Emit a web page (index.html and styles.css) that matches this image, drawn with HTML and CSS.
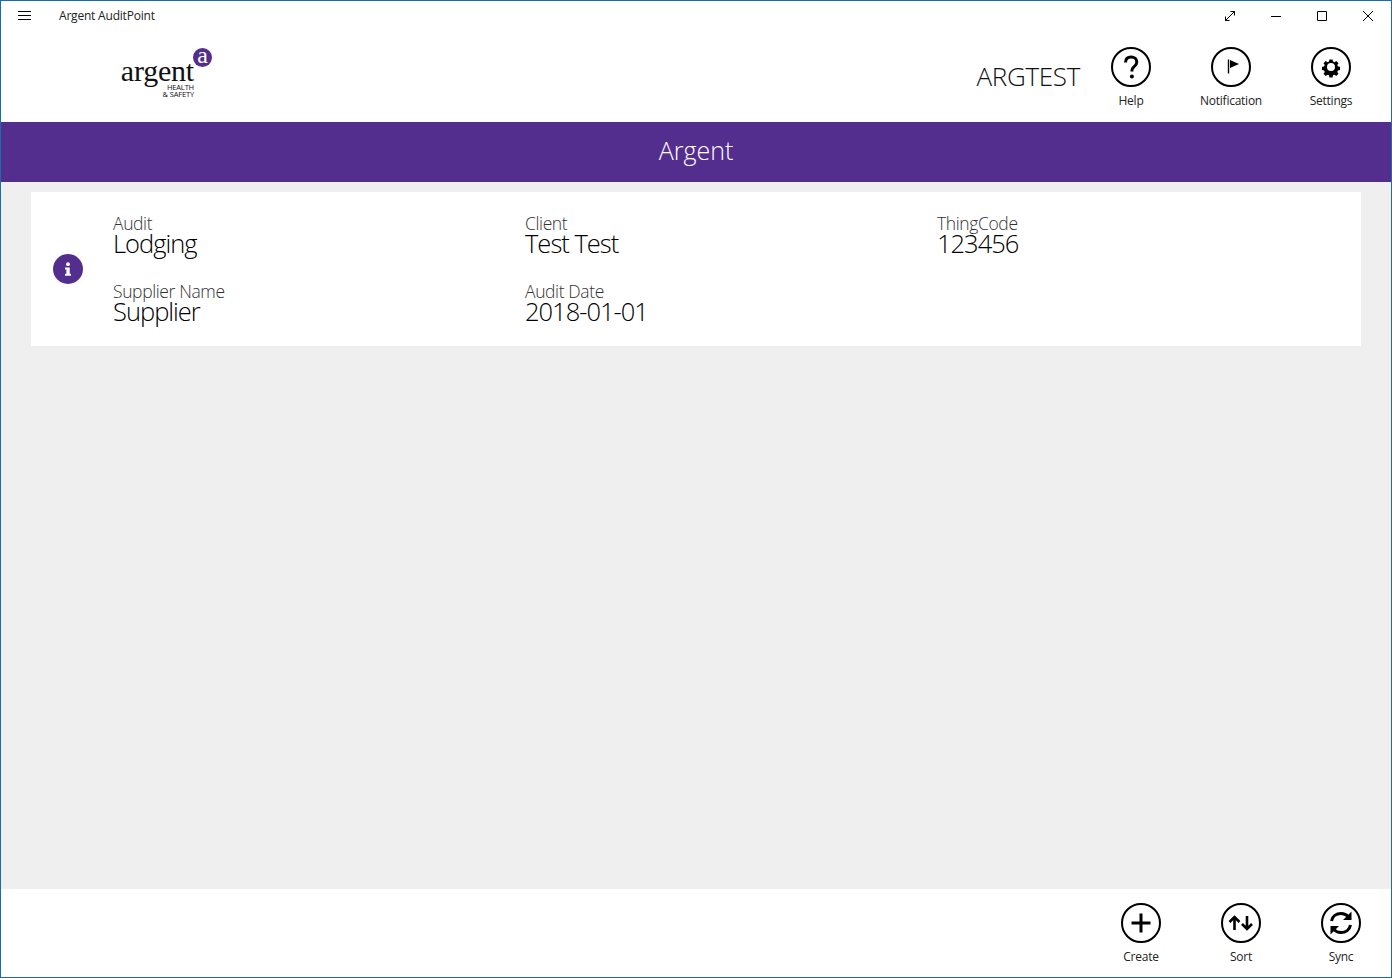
FILE: index.html
```html
<!DOCTYPE html>
<html lang="en">
<head>
<meta charset="utf-8">
<title>Argent AuditPoint</title>
<link rel="stylesheet" href="styles.css">
</head>
<body>
<div class="window">
  <div class="titlebar">
    <svg class="hamburger" width="13" height="10" viewBox="0 0 13 10"><path d="M0 .5h13M0 4.500h13M0 8.500h13" stroke="#000" fill="none"/></svg>
    <span class="apptitle">Argent AuditPoint</span>
    <div class="winctrls">
      <span class="winbtn"><svg width="12" height="12" viewBox="0 0 12 12" fill="none" stroke="#000"><path d="M1.500 10.500l9-9M6.500 1.500h4v4M1.500 6.500v4h4"/></svg></span>
      <span class="winbtn"><svg width="12" height="12" viewBox="0 0 12 12" fill="none" stroke="#000"><path d="M1 6.500h10"/></svg></span>
      <span class="winbtn"><svg width="12" height="12" viewBox="0 0 12 12" fill="none" stroke="#000"><path d="M1.500 1.500h9v9h-9z"/></svg></span>
      <span class="winbtn"><svg width="12" height="12" viewBox="0 0 12 12" fill="none" stroke="#000"><path d="M1 1l10 10M11 1L1 11"/></svg></span>
    </div>
  </div>
  <header class="header">
    <div class="logo">
      <span class="logo-mark">a</span>
      <span class="logo-name">argent</span>
      <span class="logo-sub">HEALTH</span>
      <span class="logo-sub">&amp; SAFETY</span>
    </div>
    <div class="username">ARGTEST</div>
    <div class="action">
      <span class="circle"><svg width="36" height="36" viewBox="0 0 36 36"><path d="M12.500 13.500c0-3.500 2.300-5.500 5.700-5.500 3.300 0 5.600 1.900 5.600 4.900 0 2.400-1.200 3.600-2.900 5-1.500 1.200-2 2-2 3.900v.7" fill="none" stroke="#000" stroke-width="3"/><circle cx="18.900" cy="27.500" r="2"/></svg></span>
      <span class="action-label">Help</span>
    </div>
    <div class="action">
      <span class="circle"><svg width="36" height="36" viewBox="0 0 36 36"><path d="M15.500 10.500v14" stroke="#000" stroke-width="1.400"/><path d="M17 11v8l9-4z"/></svg></span>
      <span class="action-label">Notification</span>
    </div>
    <div class="action">
      <span class="circle"><svg width="36" height="36" viewBox="0 0 36 36"><path fill-rule="evenodd" d="M16 8.500h4l.5 2.700 1.800.8 2.300-1.600 2.800 2.800-1.600 2.300.8 1.800 2.700.5v4l-2.700.5-.8 1.800 1.600 2.300-2.800 2.800-2.300-1.600-1.800.8-.5 2.700h-4l-.5-2.700-1.800-.8-2.300 1.600-2.800-2.800 1.600-2.300-.8-1.800-2.700-.5v-4l2.700-.5.8-1.800-1.600-2.300 2.800-2.800 2.300 1.600 1.800-.8zM18 13a5 5 0 1 0 0 10 5 5 0 0 0 0-10z" transform="translate(3.600 3.600) scale(.8)"/></svg></span>
      <span class="action-label">Settings</span>
    </div>
  </header>
  <div class="band">Argent</div>
  <main class="main">
    <section class="card">
      <span class="info"><svg width="30" height="30" viewBox="0 0 30 30"><circle cx="15" cy="15" r="15" fill="#542e8f"/><circle cx="15" cy="10.200" r="1.900" fill="#fff"/><path d="M12 13.500h4.700v6.300H18v1.900h-6v-1.900h1.400v-4.400H12z" fill="#fff"/></svg></span>
      <div class="fields">
        <div class="field"><div class="field-label">Audit</div><div class="field-value">Lodging</div></div>
        <div class="field"><div class="field-label">Client</div><div class="field-value">Test Test</div></div>
        <div class="field"><div class="field-label">ThingCode</div><div class="field-value">123456</div></div>
        <div class="field"><div class="field-label">Supplier Name</div><div class="field-value">Supplier</div></div>
        <div class="field"><div class="field-label">Audit Date</div><div class="field-value">2018-01-01</div></div>
      </div>
    </section>
  </main>
  <footer class="footer">
    <div class="action">
      <span class="circle"><svg width="36" height="36" viewBox="0 0 36 36"><path d="M18 8.500v19M8.500 18h19" stroke="#000" stroke-width="3" fill="none"/></svg></span>
      <span class="action-label">Create</span>
    </div>
    <div class="action">
      <span class="circle"><svg width="36" height="36" viewBox="0 0 36 36"><path d="M11.500 25V12.500M6.500 17l5-5 5 5M24 11v12.500M19 19l5 5 5-5" stroke="#000" stroke-width="2.600" fill="none"/></svg></span>
      <span class="action-label">Sort</span>
    </div>
    <div class="action">
      <span class="circle"><svg width="36" height="36" viewBox="0 0 36 36"><path d="M8.500 16c.9-4.700 4.800-7.500 9.500-7.500 3 0 5.500 1.100 7.200 3.100" stroke="#000" stroke-width="3" fill="none"/><path d="M28.500 6.500v8.500H20z"/><path d="M27.500 20c-.9 4.700-4.800 7.500-9.500 7.500-3 0-5.500-1.100-7.200-3.100" stroke="#000" stroke-width="3" fill="none"/><path d="M7.500 29.500V21H16z"/></svg></span>
      <span class="action-label">Sync</span>
    </div>
  </footer>
</div>
</body>
</html>
```
FILE: styles.css
```css
* { box-sizing: border-box; }
html, body { margin: 0; padding: 0; }
body { font-family: "Open Sans", "Noto Sans", sans-serif; color: #000; background: #fff; }
.window { width: 1392px; height: 978px; border: 1px solid #1b6ca8; display: flex; flex-direction: column; overflow: hidden; }

.titlebar { height: 31px; flex: none; display: flex; align-items: center; padding-left: 17px; }
.hamburger { display: block; margin-top: -1px; }
.apptitle { margin-left: 28px; font-size: 12px; letter-spacing: -.2px; color: #222; margin-top: -2px; }
.winctrls { margin-left: auto; display: flex; }
.winbtn { width: 46px; height: 30px; display: flex; align-items: center; justify-content: center; margin-top: -1px; }

.header { height: 90px; flex: none; display: flex; align-items: flex-start; padding-right: 10px; }
.logo { width: 92px; height: 56px; margin: 15px 0 0 119px; position: relative; display: flex; flex-direction: column; align-items: flex-end; padding-right: 18px; padding-top: 11px; }
.logo-mark { position: absolute; top: 1px; right: 0; width: 19px; height: 19px; border-radius: 50%; background: #542e8f; color: #fff; font: 24px/15px "Liberation Serif", serif; text-align: center; }
.logo-name { font: 30px/26px "Liberation Serif", serif; letter-spacing: -.2px; color: #111; }
.logo-sub { font: 7.500px/7px "Open Sans", sans-serif; letter-spacing: -.15px; color: #111; }

.username { margin-left: auto; margin-top: 24px; margin-right: 1px; font-size: 26px; line-height: 40px; font-weight: 300; letter-spacing: -.3px; color: #111; }
.action { width: 100px; flex: none; display: flex; flex-direction: column; align-items: center; padding-top: 14px; }
.header .action { padding-top: 15px; }
.circle { width: 40px; height: 40px; border: 2px solid #000; border-radius: 50%; display: flex; align-items: center; justify-content: center; }
.action-label { margin-top: 5px; font-size: 12px; line-height: 18px; letter-spacing: -.25px; color: #222; }

.band { height: 60px; flex: none; background: #542e8f; color: #fff; display: flex; align-items: center; justify-content: center; font-size: 25px; font-weight: 300; letter-spacing: 0; padding-bottom: 4px; }

.main { flex: 1; background: #efefef; padding: 10px 30px; }
.card { height: 154px; background: #fff; display: flex; align-items: center; padding-left: 22px; }
.info { width: 30px; height: 30px; flex: none; }
.info svg { display: block; }
.fields { margin-left: 30px; align-self: flex-start; margin-top: 21px; display: grid; grid-template-columns: repeat(3, 412px); row-gap: 14px; }
.field-label { font-size: 17.500px; line-height: 20px; font-weight: 300; letter-spacing: -.38px; color: #333; }
.field-value { font-size: 25.500px; line-height: 24px; margin-top: -2px; height: 36px; font-weight: 300; letter-spacing: -1px; color: #000; }

.footer { height: 88px; flex: none; display: flex; justify-content: flex-end; }
```
